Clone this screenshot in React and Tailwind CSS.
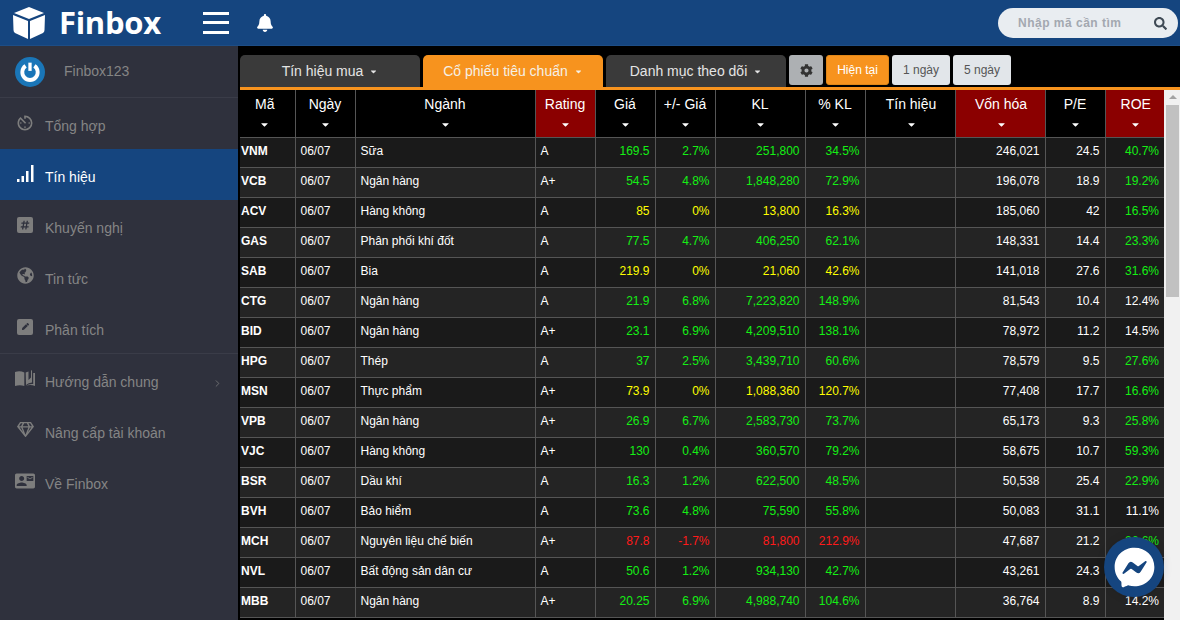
import React from "react";
import { FaCog, FaBell, FaSearch, FaFacebookMessenger, FaRegGem, FaGlobeAmericas, FaHashtag, FaCaretDown, FaPen } from "react-icons/fa";
import { MdContactMail, MdAvTimer } from "react-icons/md";
import { ChevronRight } from "lucide-react";

const G = "text-[#14f014]", Y = "text-[#ffff00]", R = "text-[#ff1a1a]", W = "text-white";

const rows = [
  ["VNM","Sữa","A","169.5","2.7%","251,800","34.5%","246,021","24.5","40.7%",G,G],
  ["VCB","Ngân hàng","A+","54.5","4.8%","1,848,280","72.9%","196,078","18.9","19.2%",G,G],
  ["ACV","Hàng không","A","85","0%","13,800","16.3%","185,060","42","16.5%",Y,G],
  ["GAS","Phân phối khí đốt","A","77.5","4.7%","406,250","62.1%","148,331","14.4","23.3%",G,G],
  ["SAB","Bia","A","219.9","0%","21,060","42.6%","141,018","27.6","31.6%",Y,G],
  ["CTG","Ngân hàng","A","21.9","6.8%","7,223,820","148.9%","81,543","10.4","12.4%",G,W],
  ["BID","Ngân hàng","A+","23.1","6.9%","4,209,510","138.1%","78,972","11.2","14.5%",G,W],
  ["HPG","Thép","A","37","2.5%","3,439,710","60.6%","78,579","9.5","27.6%",G,G],
  ["MSN","Thực phẩm","A+","73.9","0%","1,088,360","120.7%","77,408","17.7","16.6%",Y,G],
  ["VPB","Ngân hàng","A+","26.9","6.7%","2,583,730","73.7%","65,173","9.3","25.8%",G,G],
  ["VJC","Hàng không","A+","130","0.4%","360,570","79.2%","58,675","10.7","59.3%",G,G],
  ["BSR","Dầu khí","A","16.3","1.2%","622,500","48.5%","50,538","25.4","22.9%",G,G],
  ["BVH","Bảo hiểm","A","73.6","4.8%","75,590","55.8%","50,083","31.1","11.1%",G,W],
  ["MCH","Nguyên liệu chế biến","A+","87.8","-1.7%","81,800","212.9%","47,687","21.2","26.6%",R,G],
  ["NVL","Bất động sản dân cư","A","50.6","1.2%","934,130","42.7%","43,261","24.3","17.3%",G,G],
  ["MBB","Ngân hàng","A+","20.25","6.9%","4,988,740","104.6%","36,764","8.9","14.2%",G,W],
];

const heads = [
  ["Mã", "w-[55px]", false, "pr-[5px]"],
  ["Ngày", "w-[60px]", false, ""],
  ["Ngành", "w-[180px]", false, ""],
  ["Rating", "w-[60px]", true, ""],
  ["Giá", "w-[60px]", false, ""],
  ["+/- Giá", "w-[60px]", false, ""],
  ["KL", "w-[90px]", false, ""],
  ["% KL", "w-[60px]", false, ""],
  ["Tín hiệu", "w-[90px]", false, "pl-[2px]"],
  ["Vốn hóa", "w-[90px]", true, "pl-[2px]"],
  ["P/E", "w-[60px]", false, ""],
  ["ROE", "w-[59px]", true, "pl-[2px]"],
];

function Cube() {
  return (
    <svg viewBox="0 0 34 34" className="w-[34px] h-[34px]" fill="#fff">
      <path d="M17 1 L32 7 L17 13 L2 7 Z" />
      <path d="M1 9 L16 15 L16 33 L3 27 Q1.500 26 1.500 24 Z" />
      <path d="M33 9 L18 15 L18 33 L31 27 Q32.500 26 32.500 24 Z" />
    </svg>
  );
}

function Signal() {
  return (
    <svg viewBox="0 0 17 17" className="w-[17px] h-[17px]" fill="#fff">
      <rect x="0" y="14" width="2.500" height="3" />
      <rect x="4.500" y="11" width="2.500" height="6" />
      <rect x="9" y="6" width="2.500" height="11" />
      <rect x="14" y="0" width="2.500" height="17" />
    </svg>
  );
}

function Book() {
  return (
    <svg viewBox="0 0 20 17" className="w-[20px] h-[17px]" fill="#7d7d7d">
      <path d="M0 2 Q5 0.500 9.300 2.500 V16 Q5 14.500 0 16 Z" />
      <path d="M10.700 2.500 Q12 1.800 13.500 1.500 V10 L16 7.500 V0.500 L17 0.300 V12.500 Q13.500 12.500 11 15 Z" />
      <path d="M10.700 16 Q15 14 20 16 V3 H18.200 V14 Q14 13.500 10.700 16 Z" />
    </svg>
  );
}

function SquareIcon({ children }) {
  return (
    <span className="w-4 h-4 rounded-[2px] bg-[#7d7d7d] flex items-center justify-center text-[#2f313d]">{children}</span>
  );
}

function NavItem({ icon, label, active, chevron }) {
  return (
    <div className={`h-[51px] flex items-center relative pl-[45px] text-sm ${active ? "bg-[#15457f] text-white" : "text-[#858585]"}`}>
      <span className="absolute left-[15px] top-0 bottom-[2px] w-5 flex items-center justify-center">{icon}</span>
      <span className="pt-[4px]">{label}</span>
      {chevron && <ChevronRight size={11} strokeWidth={1.5} className="absolute right-[15px] top-[24px]" />}
    </div>
  );
}

function Tab({ label, active }) {
  return (
    <div className={`w-[180px] h-8 rounded-t-[5px] flex items-center justify-center gap-[6px] text-sm ${active ? "bg-[#f7931e] text-[#f5f0e6]" : "bg-[#3a3a3a] text-[#e4e4e4]"}`}>
      <span>{label}</span>
      <FaCaretDown className="text-[9px]" />
    </div>
  );
}

export default function App() {
  return (
    <div className="w-[1180px] h-[620px] overflow-hidden flex flex-col bg-black text-white font-['Liberation_Sans',Arial,sans-serif]">
      <header className="h-[46px] shrink-0 bg-[#15457f] flex items-center border-b border-[#1d4d86]">
        <div className="ml-3 flex items-center">
          <Cube />
          <span className="ml-[13px] text-[31px] leading-none font-bold font-['Open_Sans',sans-serif] tracking-[-0.3px]">Finbox</span>
        </div>
        <div className="ml-[42px] w-[26px] h-[22px] flex flex-col justify-between">
          <span className="h-[3px] bg-white block" />
          <span className="h-[3px] bg-white block" />
          <span className="h-[3px] bg-white block" />
        </div>
        <FaBell className="ml-[27px] text-white text-[18px]" />
        <div className="ml-auto mr-[2px] w-[180px] h-[30px] rounded-[15px] bg-[#e9edf1] flex items-center relative pl-5">
          <span className="text-xs font-bold text-[#a3a8b0] tracking-[0.5px]">Nhập mã cần tìm</span>
          <FaSearch className="absolute right-[11px] top-[9px] text-[13px] text-[#3f4a55]" />
        </div>
      </header>

      <div className="flex flex-1 min-h-0">
        <aside className="w-[238px] shrink-0 bg-[#2f313d]">
          <div className="h-[52px] flex items-center pl-[15px] border-b border-[#3a3c48]">
            <span className="w-[30px] h-[30px] rounded-full bg-[#1a76b8] flex items-center justify-center">
              <svg viewBox="0 0 20 20" className="w-[22px] h-[22px]" fill="none" stroke="#fff" strokeWidth="3.500">
                <path d="M6 4.500 A7 7 0 1 0 14 4.500" />
                <path d="M10 1.500 V9" strokeWidth="3" stroke="#fff" />
              </svg>
            </span>
            <span className="ml-[19px] text-sm text-[#858585] pb-[2px]">Finbox123</span>
          </div>
          <NavItem label="Tổng hợp" icon={<MdAvTimer className="text-[#7d7d7d] text-[20px]" />} />
          <NavItem label="Tín hiệu" active icon={<Signal />} />
          <NavItem label="Khuyến nghị" icon={<SquareIcon><FaHashtag className="text-[10px]" /></SquareIcon>} />
          <NavItem label="Tin tức" icon={<FaGlobeAmericas className="text-[#7d7d7d] text-[17px]" />} />
          <NavItem label="Phân tích" icon={<SquareIcon><FaPen className="text-[7px]" /></SquareIcon>} />
          <div className="h-px bg-[#3a3c48]" />
          <NavItem label="Hướng dẫn chung" chevron icon={<Book />} />
          <NavItem label="Nâng cấp tài khoản" icon={<FaRegGem className="text-[#7d7d7d] text-[17px]" />} />
          <NavItem label="Về Finbox" icon={<MdContactMail className="text-[#7d7d7d] text-[24px]" />} />
        </aside>

        <main className="flex-1 min-w-0 flex flex-col">
          <div className="pl-[2px] pt-[9px] flex gap-[3px] items-start shrink-0 h-[41px]">
            <Tab label="Tín hiệu mua" />
            <Tab label="Cổ phiếu tiêu chuẩn" active />
            <Tab label="Danh mục theo dõi" />
            <div className="w-[34px] h-[30px] rounded-[3px] bg-[#adb0b3] flex items-center justify-center">
              <FaCog className="text-[#333] text-[13px]" />
            </div>
            <div className="w-[63px] h-[30px] rounded-[3px] bg-[#f7931e] border border-[#e08718] flex items-center justify-center text-xs text-white">Hiện tại</div>
            <div className="w-[58px] h-[30px] rounded-[3px] bg-[#e2e6ea] flex items-center justify-center text-xs text-[#555]">1 ngày</div>
            <div className="w-[58px] h-[30px] rounded-[3px] bg-[#e2e6ea] flex items-center justify-center text-xs text-[#555]">5 ngày</div>
          </div>
          <div className="ml-[2px] h-[3px] bg-[#f7931e] shrink-0" />
          <div className="flex-1 flex min-h-0 pl-[2px]">
            <div className="w-[924px] shrink-0 overflow-hidden">
              <table className="table-fixed w-[924px] border-collapse">
                <colgroup>
                  {heads.map((h) => <col key={h[0]} className={h[1]} />)}
                </colgroup>
                <thead>
                  <tr className="h-[47px]">
                    {heads.map((h, i) => (
                      <th key={h[0]} className={`${h[2] ? "bg-[#8b0000]" : "bg-black"} ${i > 0 ? "border-l" : ""} border-b border-[#555] p-0 font-normal align-top text-sm`}>
                        <div className={`h-[46px] flex flex-col items-center pt-[6px] ${h[3]}`}>
                          <span className="leading-4">{h[0]}</span>
                          <FaCaretDown className="mt-[7px] text-[11px]" />
                        </div>
                      </th>
                    ))}
                  </tr>
                </thead>
                <tbody className="text-xs">
                  {rows.map((r, i) => {
                    const bg = i % 2 ? "bg-[#242424]" : "bg-[#1a1a1a]";
                    const c = "border-l border-b border-[#555] h-[30px] p-0 px-[5px] pb-[2px]";
                    return (
                      <tr key={r[0]} className={bg}>
                        <td className="border-b border-[#555] h-[30px] p-0 pl-px pb-[2px] font-bold">{r[0]}</td>
                        <td className={c}>06/07</td>
                        <td className={c}>{r[1]}</td>
                        <td className={c}>{r[2]}</td>
                        <td className={`${c} text-right ${r[10]}`}>{r[3]}</td>
                        <td className={`${c} text-right ${r[10]}`}>{r[4]}</td>
                        <td className={`${c} text-right ${r[10]}`}>{r[5]}</td>
                        <td className={`${c} text-right ${r[10]}`}>{r[6]}</td>
                        <td className={c}></td>
                        <td className={`${c} text-right`}>{r[7]}</td>
                        <td className={`${c} text-right`}>{r[8]}</td>
                        <td className={`${c} text-right ${r[11]}`}>{r[9]}</td>
                      </tr>
                    );
                  })}
                </tbody>
              </table>
            </div>
            <div className="w-4 shrink-0 bg-[#f1f1f1] flex flex-col items-center pl-px">
              <span className="mt-[5px] w-0 h-0 border-x-[4px] border-x-transparent border-b-[4px] border-b-[#a3a3a3]" />
              <span className="mt-[6px] w-[13px] h-[192px] bg-[#c1c1c1]" />
            </div>
          </div>
        </main>
      </div>

      <div className="fixed right-[16px] bottom-[23px] w-[60px] h-[60px] rounded-full bg-[#15457f] flex items-center justify-center shadow-[0_0_10px_rgba(0,0,0,0.1)]">
        <FaFacebookMessenger className="text-white text-[41px]" />
      </div>
    </div>
  );
}
